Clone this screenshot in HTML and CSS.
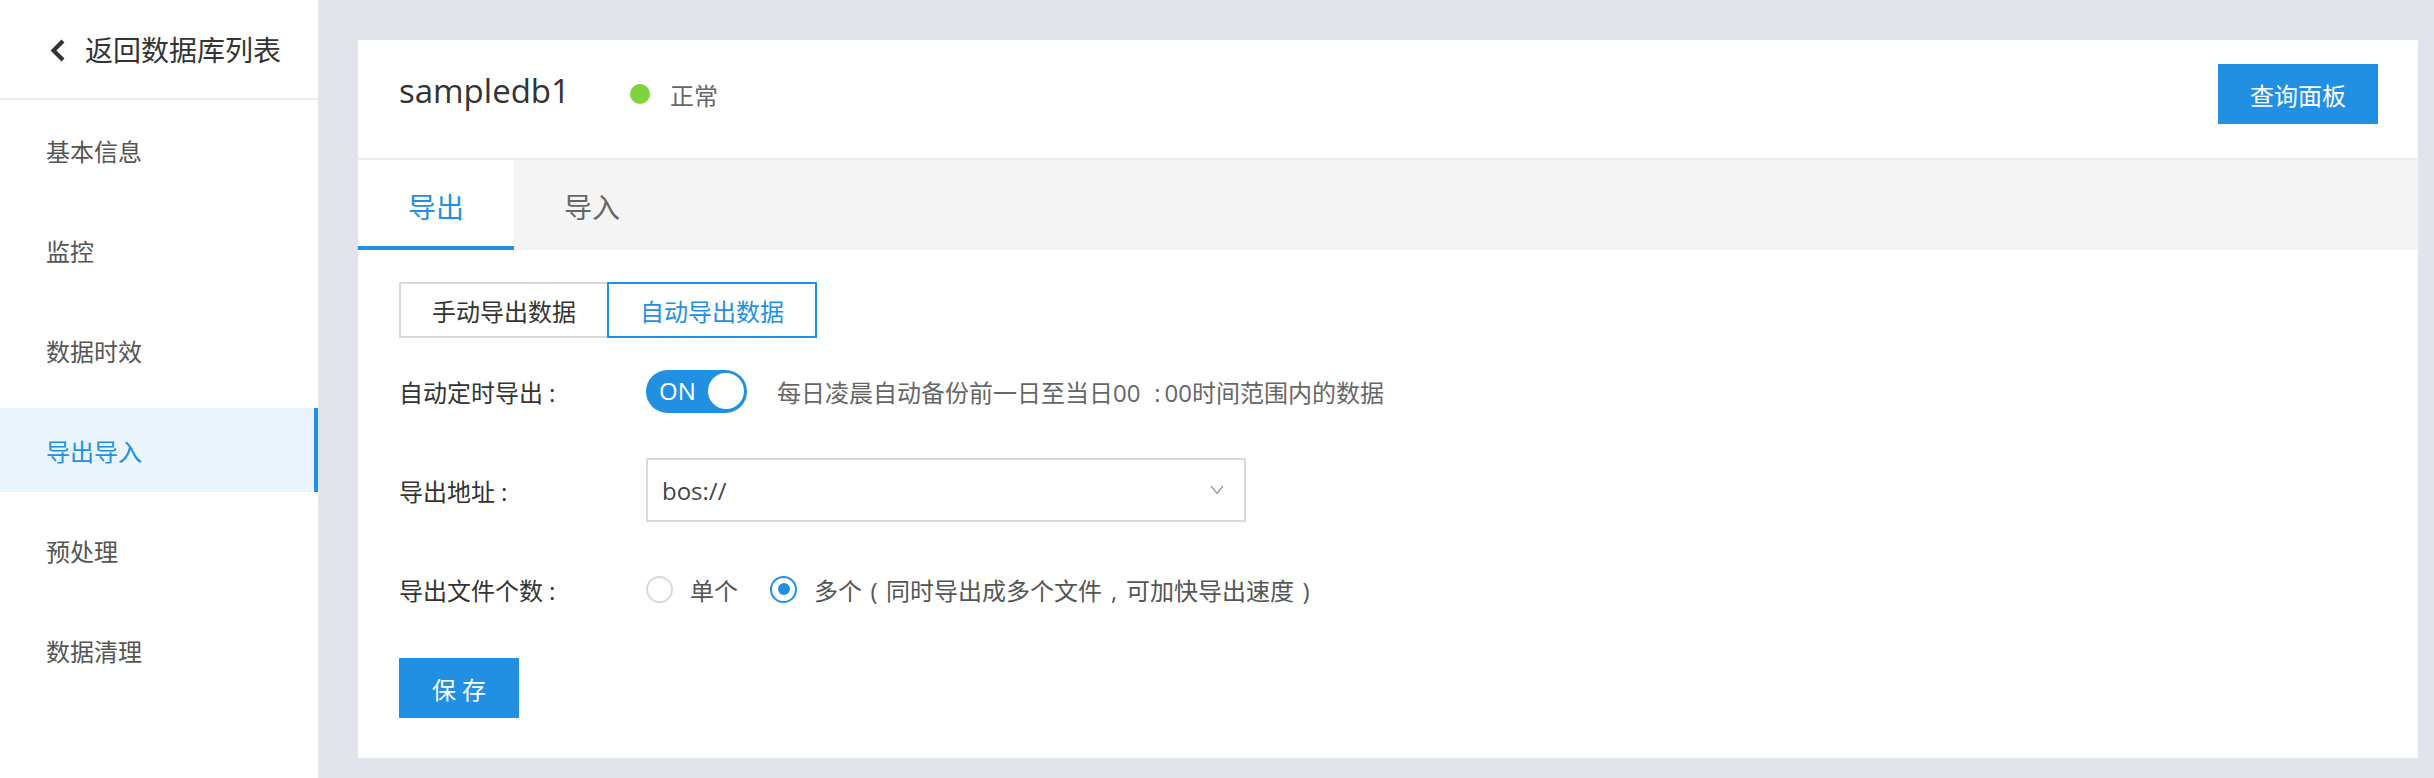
FILE: index.html
```html
<!DOCTYPE html>
<html lang="zh-CN">
<head>
<meta charset="utf-8">
<title>导出导入</title>
<link rel="stylesheet" href="styles.css">
</head>
<body>
<div class="app">
  <aside class="sidebar">
    <div class="side-head">
      <svg class="back-icon" width="17" height="23" viewBox="0 0 17 23"><polyline points="14,2 4.5,11.5 14,21" fill="none" stroke="#333" stroke-width="4.2" stroke-linejoin="miter"/></svg>
      <span>返回数据库列表</span>
    </div>
    <nav class="menu">
      <div class="menu-item">基本信息</div>
      <div class="menu-item">监控</div>
      <div class="menu-item">数据时效</div>
      <div class="menu-item active">导出导入</div>
      <div class="menu-item">预处理</div>
      <div class="menu-item">数据清理</div>
    </nav>
  </aside>
  <main class="main">
    <section class="card">
      <header class="card-head">
        <div class="title">sampledb1</div>
        <div class="status"><span class="dot"></span><span>正常</span></div>
        <button class="btn btn-query">查询面板</button>
      </header>
      <div class="tabs">
        <div class="tab active">导出</div>
        <div class="tab">导入</div>
      </div>
      <div class="body">
        <div class="subtabs">
          <div class="subtab">手动导出数据</div>
          <div class="subtab active">自动导出数据</div>
        </div>
        <div class="form">
          <div class="row">
            <div class="label">自动定时导出<span class="colon">:</span></div>
            <div class="switch"><span class="switch-text">ON</span><span class="knob"></span></div>
            <div class="desc">每日凌晨自动备份前一日至当日00<span class="pc pc-r">:</span>00时间范围内的数据</div>
          </div>
          <div class="row">
            <div class="label">导出地址<span class="colon">:</span></div>
            <div class="select">
              <span>bos://</span>
              <svg width="14" height="10" viewBox="0 0 14 10"><polyline points="1,1 7,8.5 13,1" fill="none" stroke="#999" stroke-width="1.3"/></svg>
            </div>
          </div>
          <div class="row">
            <div class="label">导出文件个数<span class="colon">:</span></div>
            <label class="radio"><span class="circle"></span><span>单个</span></label>
            <label class="radio"><span class="circle on"></span><span>多个<span class="pc">(</span>同时导出成多个文件<span class="pc">,</span>可加快导出速度<span class="pc">)</span></span></label>
          </div>
        </div>
        <button class="btn btn-save">保 存</button>
      </div>
    </section>
  </main>
</div>
</body>
</html>
```

FILE: styles.css
```css
html, body {
  margin: 0;
  padding: 0;
}
body {
  font-family: "Open Sans", "Noto Sans CJK SC", sans-serif;
  background: #e1e4eb;
  color: #333;
}
.pc {
  display: inline-block;
  width: 1em;
  text-align: center;
}
.pc-r {
  text-align: right;
  padding-right: 4px;
  box-sizing: border-box;
}
.colon {
  padding-left: 6px;
}
.app {
  display: flex;
  height: 778px;
}
.sidebar {
  width: 318px;
  flex-shrink: 0;
  background: #fff;
}
.side-head {
  height: 98px;
  border-bottom: 2px solid #ececec;
  display: flex;
  align-items: center;
  padding-left: 49px;
  gap: 19px;
  font-size: 28px;
  color: #333;
}
.back-icon {
  display: block;
  margin-top: 2px;
}
.menu {
  padding-top: 8px;
  display: flex;
  flex-direction: column;
  gap: 16px;
}
.menu-item {
  height: 84px;
  display: flex;
  align-items: center;
  padding-left: 46px;
  font-size: 24px;
  color: #555;
}
.menu-item.active {
  background: #eaf4fc;
  color: #2190e3;
  box-shadow: inset -4px 0 0 #2190e3;
}
.main {
  flex: 1;
  padding: 40px 16px 20px 40px;
}
.card {
  background: #fff;
  height: 718px;
  display: flex;
  flex-direction: column;
}
.card-head {
  display: flex;
  align-items: center;
  padding: 24px 40px 34px 41px;
  border-bottom: 2px solid #ebebeb;
}
.title {
  font-size: 33px;
  color: #333;
  line-height: 1;
  margin-top: -8px;
}
.status {
  display: flex;
  align-items: center;
  gap: 20px;
  margin-left: 60px;
  font-size: 24px;
  color: #666;
}
.dot {
  width: 20px;
  height: 20px;
  border-radius: 50%;
  background: #7ed23a;
}
.btn {
  border: none;
  background: #2190e3;
  color: #fff;
  font-family: inherit;
  font-size: 24px;
  display: flex;
  align-items: center;
  justify-content: center;
  padding: 0;
}
.btn-query {
  margin-left: auto;
  width: 160px;
  height: 60px;
}
.tabs {
  display: flex;
  height: 90px;
  background: #f4f4f4;
}
.tab {
  width: 156px;
  display: flex;
  align-items: center;
  justify-content: center;
  font-size: 28px;
  color: #666;
  padding-top: 2px;
}
.tab.active {
  background: #fff;
  color: #2190e3;
  box-shadow: inset 0 -4px 0 #2190e3;
}
.body {
  padding: 32px 40px 0 41px;
}
.subtabs {
  display: flex;
}
.subtab {
  height: 56px;
  box-sizing: border-box;
  padding: 0 31px;
  border: 2px solid #d9d9d9;
  display: flex;
  align-items: center;
  font-size: 24px;
  color: #333;
  background: #fff;
}
.subtab + .subtab {
  margin-left: -2px;
}
.subtab.active {
  border-color: #2190e3;
  color: #2190e3;
  position: relative;
}
.form {
  display: flex;
  flex-direction: column;
  gap: 35px;
  margin-top: 21px;
}
.row {
  display: flex;
  align-items: center;
  height: 64px;
}
.label {
  width: 247px;
  flex-shrink: 0;
  font-size: 24px;
  color: #333;
}
.switch {
  width: 101px;
  height: 43px;
  box-sizing: border-box;
  border-radius: 22px;
  background: #2190e3;
  display: flex;
  align-items: center;
  justify-content: space-between;
  padding: 0 3px 0 13px;
}
.switch-text {
  color: #fff;
  font-size: 24px;
  line-height: 1;
}
.knob {
  width: 36px;
  height: 36px;
  border-radius: 50%;
  background: #fff;
}
.desc {
  margin-left: 30px;
  font-size: 24px;
  color: #666;
}
.select {
  width: 600px;
  height: 64px;
  box-sizing: border-box;
  border: 2px solid #dadada;
  display: flex;
  align-items: center;
  justify-content: space-between;
  padding: 0 20px 0 14px;
  font-size: 24px;
  color: #444;
}
.select svg {
  display: block;
}
.radio {
  display: flex;
  align-items: center;
  gap: 17px;
  font-size: 24px;
  color: #555;
}
.radio + .radio {
  margin-left: 32px;
}
.circle {
  width: 27px;
  height: 27px;
  box-sizing: border-box;
  border: 2px solid #d9d9d9;
  border-radius: 50%;
  display: flex;
  align-items: center;
  justify-content: center;
}
.circle.on {
  border-color: #2190e3;
}
.circle.on::after {
  content: "";
  width: 12px;
  height: 12px;
  border-radius: 50%;
  background: #2190e3;
}
.btn-save {
  margin-top: 37px;
  width: 120px;
  height: 60px;
}
```
